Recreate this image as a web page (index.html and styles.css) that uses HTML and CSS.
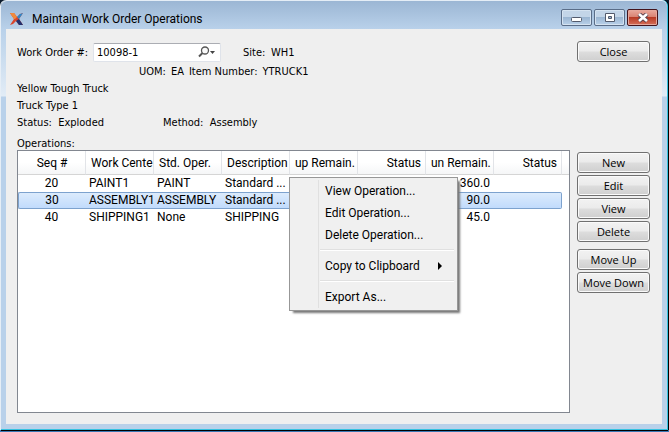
FILE: index.html
```html
<!DOCTYPE html>
<html lang="en">
<head>
<meta charset="utf-8">
<title>Maintain Work Order Operations</title>
<link rel="stylesheet" href="styles.css">
</head>
<body>
<div class="window">
  <header class="titlebar">
    <svg class="logo" width="14" height="12" viewBox="0 0 14 12" aria-hidden="true">
      <path d="M0 0H4L7 4 10 1 13 0 9 6 13 12H9L6 8 3 11 0 12 4 6Z" fill="#d9452c"/>
      <path d="M0 0H4L7 4 5 6H4Z" fill="#f08a3c"/>
      <path d="M7 4 10 1 13 0 9 6Z" fill="#2f86c8"/>
      <path d="M9 6 13 12H9L6 8Z" fill="#22306e"/>
    </svg>
    <h1 class="title">Maintain Work Order Operations</h1>
    <div class="controls">
      <button class="control" type="button" aria-label="Minimize">
        <svg width="12" height="10" viewBox="0 0 12 10"><rect x=".5" y="4.500" width="10" height="4" rx="1" fill="#fff" stroke="#525a6c"/></svg>
      </button>
      <button class="control" type="button" aria-label="Maximize">
        <svg width="12" height="10" viewBox="0 0 12 10"><path d="M1.500.500h9v8h-9zM4.500 3.500h3v2h-3z" fill="#fff" fill-rule="evenodd" stroke="#525a6c"/></svg>
      </button>
      <button class="control control-close" type="button" aria-label="Close window">
        <svg width="12" height="10" viewBox="0 0 12 10"><path d="M2 1 10 8M10 1 2 8" stroke="#5b4450" stroke-width="4.400"/><path d="M2 1 10 8M10 1 2 8" stroke="#fff" stroke-width="2.600"/></svg>
      </button>
    </div>
  </header>

  <main class="panel">
    <section class="details">
      <div class="row row-order">
        <label class="order-label" for="order">Work Order #:</label>
        <div class="lookup">
          <input class="order" id="order" type="text" value="10098-1">
          <button class="lookup-button" type="button" aria-label="Find work order">
            <svg width="18" height="12" viewBox="0 0 18 12"><circle cx="7" cy="4.500" r="3.500" fill="#fafafa" stroke="#555" stroke-width="1.300"/><path d="M4.500 7 1 10.500" stroke="#555" stroke-width="2"/><path d="M12 5h5l-2.500 3Z" fill="#444"/></svg>
          </button>
        </div>
        <span class="site-label">Site:</span><span>WH1</span>
      </div>
      <div class="row row-item">
        <span>UOM:</span><span class="uom">EA</span><span>Item Number:</span><span>YTRUCK1</span>
      </div>
      <div class="row">Yellow Tough Truck</div>
      <div class="row">Truck Type 1</div>
      <div class="row row-status">
        <span class="status">Status:&nbsp; Exploded</span><span>Method:&nbsp; Assembly</span>
      </div>
      <h2 class="list-title" id="ops">Operations:</h2>
    </section>

    <div class="close-area"><button class="button" type="button">Close</button></div>

    <div class="list">
      <table class="table" aria-labelledby="ops">
        <colgroup><col><col><col><col><col><col><col><col><col class="col-end"></colgroup>
        <thead>
          <tr><th class="center">Seq #</th><th>Work Cente</th><th>Std. Oper.</th><th>Description</th><th class="num">up Remain.</th><th class="num">Status</th><th class="num">un Remain.</th><th class="num">Status</th><th></th></tr>
        </thead>
        <tbody>
          <tr><td class="center">20</td><td>PAINT1</td><td>PAINT</td><td>Standard ...</td><td></td><td></td><td class="num">360.0</td><td></td><td></td></tr>
          <tr class="selected"><td class="center">30</td><td>ASSEMBLY1</td><td>ASSEMBLY</td><td>Standard ...</td><td></td><td></td><td class="num">90.0</td><td></td><td></td></tr>
          <tr><td class="center">40</td><td>SHIPPING1</td><td>None</td><td>SHIPPING</td><td></td><td></td><td class="num">45.0</td><td></td><td></td></tr>
        </tbody>
      </table>
      <div class="menu" role="menu">
        <button class="item" type="button" role="menuitem">View Operation...</button>
        <button class="item" type="button" role="menuitem">Edit Operation...</button>
        <button class="item" type="button" role="menuitem">Delete Operation...</button>
        <hr class="separator">
        <button class="item" type="button" role="menuitem">Copy to Clipboard
          <svg width="5" height="8" viewBox="0 0 5 8"><path d="M0 0 4 4 0 8Z" fill="#000"/></svg>
        </button>
        <hr class="separator">
        <button class="item" type="button" role="menuitem">Export As...</button>
      </div>
    </div>

    <div class="actions">
      <button class="button" type="button">New</button>
      <button class="button" type="button">Edit</button>
      <button class="button" type="button">View</button>
      <button class="button" type="button">Delete</button>
      <button class="button button-group" type="button">Move Up</button>
      <button class="button" type="button">Move Down</button>
    </div>
  </main>
</div>
</body>
</html>
```
FILE: styles.css
```css
* { box-sizing: border-box; }

body {
  margin: 0;
  background: linear-gradient(#0a1a2c 8px, #3a78b4 9px);
  color: #000;
  font: 11px/17px "DejaVu Sans Condensed", "DejaVu Sans", sans-serif;
}

button, input { font: inherit; color: inherit; }

.window {
  display: flex;
  flex-direction: column;
  min-height: calc(100vh - 2px);
  margin: 0 1px 2px;
  padding: 0 5px 5px;
  border: solid #35c2e0;
  border-width: 0 1px 1px 0;
  border-radius: 6px 6px 0 0;
  background: linear-gradient(#9ab5d3 0, #b9d1ea 29px, #c5d9ed 50px, #e2ecf6 96px, #b9d1ea 97px);
  box-shadow: 0 1px #000, 1px 0 #000, -1px 0 #e6eef6, inset 0 1px #e4edf6;
}

.titlebar {
  display: flex;
  align-items: center;
  height: 29px;
  padding: 8px 4px 0;
  gap: 8px;
}
.logo { flex: none; }
.title {
  flex: 1;
  margin: 0;
  font: 12px/18px Roboto, "Open Sans", sans-serif;
}
.controls { display: flex; gap: 2px; align-self: flex-start; margin-top: 1px; }
.control {
  display: flex;
  align-items: center;
  justify-content: center;
  width: 31px;
  height: 17px;
  padding: 0;
  border: 1px solid #5a6d88;
  border-radius: 2px;
  background: linear-gradient(#c3d5e8 45%, #9bb6d2 50%, #b9d1ea);
  box-shadow: inset 0 0 0 1px #d5e3f1;
}
.control-close {
  border-color: #43141c;
  background: linear-gradient(#e9a99d 0, #d98373 45%, #b83a25 50%, #d5705a);
  box-shadow: inset 0 0 0 1px #e5a79b;
}

.panel {
  flex: 1;
  display: grid;
  grid-template-columns: 1fr 73px;
  grid-template-rows: auto 1fr;
  column-gap: 7px;
  padding: 12px 12px 11px 11px;
  background: #efefef;
}

.row { display: flex; height: 17px; white-space: nowrap; }
.row-order { align-items: center; height: 22px; }
.order-label { width: 76px; }
.lookup {
  display: flex;
  align-items: center;
  width: 128px;
  height: 19px;
  margin-right: 22px;
  padding-right: 4px;
  border: 1px solid #dfe3ea;
  border-top-color: #abadb3;
  border-radius: 2px;
  background: #fff;
}
.order { flex: 1; min-width: 0; padding: 0 0 0 3px; border: 0; outline: 0; background: none; }
.lookup-button { display: flex; padding: 0; border: 0; background: none; }
.site-label { width: 28px; }
.row-item { gap: 5px; padding-left: 122px; }
.status { width: 146px; }
.list-title { margin: 6px 0 0; font: inherit; line-height: 13px; }

.button {
  display: block;
  width: 100%;
  height: 21px;
  padding: 0;
  border: 1px solid #707070;
  border-radius: 3px;
  background: linear-gradient(#f2f2f2 0, #ebebeb 48%, #dddddd 52%, #cfcfcf);
  box-shadow: inset 0 0 0 1px #fafafa;
  font: 11px/17px "Open Sans", "Noto Sans", sans-serif;
}
.actions { display: flex; flex-direction: column; gap: 2px; padding-top: 2px; }
.button-group { margin-top: 5px; }

.list {
  position: relative;
  border: 1px solid #828790;
  background: #fff;
  font: 12px/17px Roboto, "Open Sans", sans-serif;
}
.table { width: 100%; table-layout: fixed; border-collapse: separate; border-spacing: 0; }
.col-end { width: 7px; }
.table th, .table td {
  height: 17px;
  padding: 0 0 0 3px;
  overflow: hidden;
  line-height: 15px;
  font-weight: 400;
  text-align: left;
  white-space: nowrap;
}
.table th {
  height: 24px;
  padding: 2px 3px 0 5px;
  border-right: 1px solid #e2e4e8;
  border-bottom: 1px solid #d5d5d5;
  background: linear-gradient(#fff 50%, #f5f6f7);
}
.table th:last-child { border-right: 0; padding: 0; }
.table td:last-child { padding: 0; }
.table .center { padding-right: 4px; text-align: center; }
.table .num { padding-right: 4px; text-align: right; }
.selected td {
  border: solid #7da2ce;
  border-width: 1px 0;
  background: linear-gradient(#dcebfc, #c1dbfc);
}
.selected td:first-child { border-left-width: 1px; border-radius: 2px 0 0 2px; }
.selected td:nth-last-child(2) { border-right-width: 1px; border-radius: 0 2px 2px 0; }
.selected td:last-child { border: 0; background: none; }

.menu {
  position: absolute;
  left: 271px;
  top: 26px;
  width: 169px;
  padding: 2px;
  border: 1px solid #979797;
  background: linear-gradient(#e0e0e0, #e0e0e0) 28px 2px / 1px calc(100% - 4px) no-repeat, #f0f0f0;
  box-shadow: 3px 3px 2px -1px #777;
}
.item {
  display: flex;
  align-items: center;
  justify-content: space-between;
  width: 100%;
  height: 22px;
  padding: 0 12px 0 33px;
  border: 0;
  background: none;
  text-align: left;
}
.separator { height: 2px; margin: 3px 1px 4px 28px; border: solid; border-width: 1px 0; border-color: #e0e0e0 transparent #fff; }
```
